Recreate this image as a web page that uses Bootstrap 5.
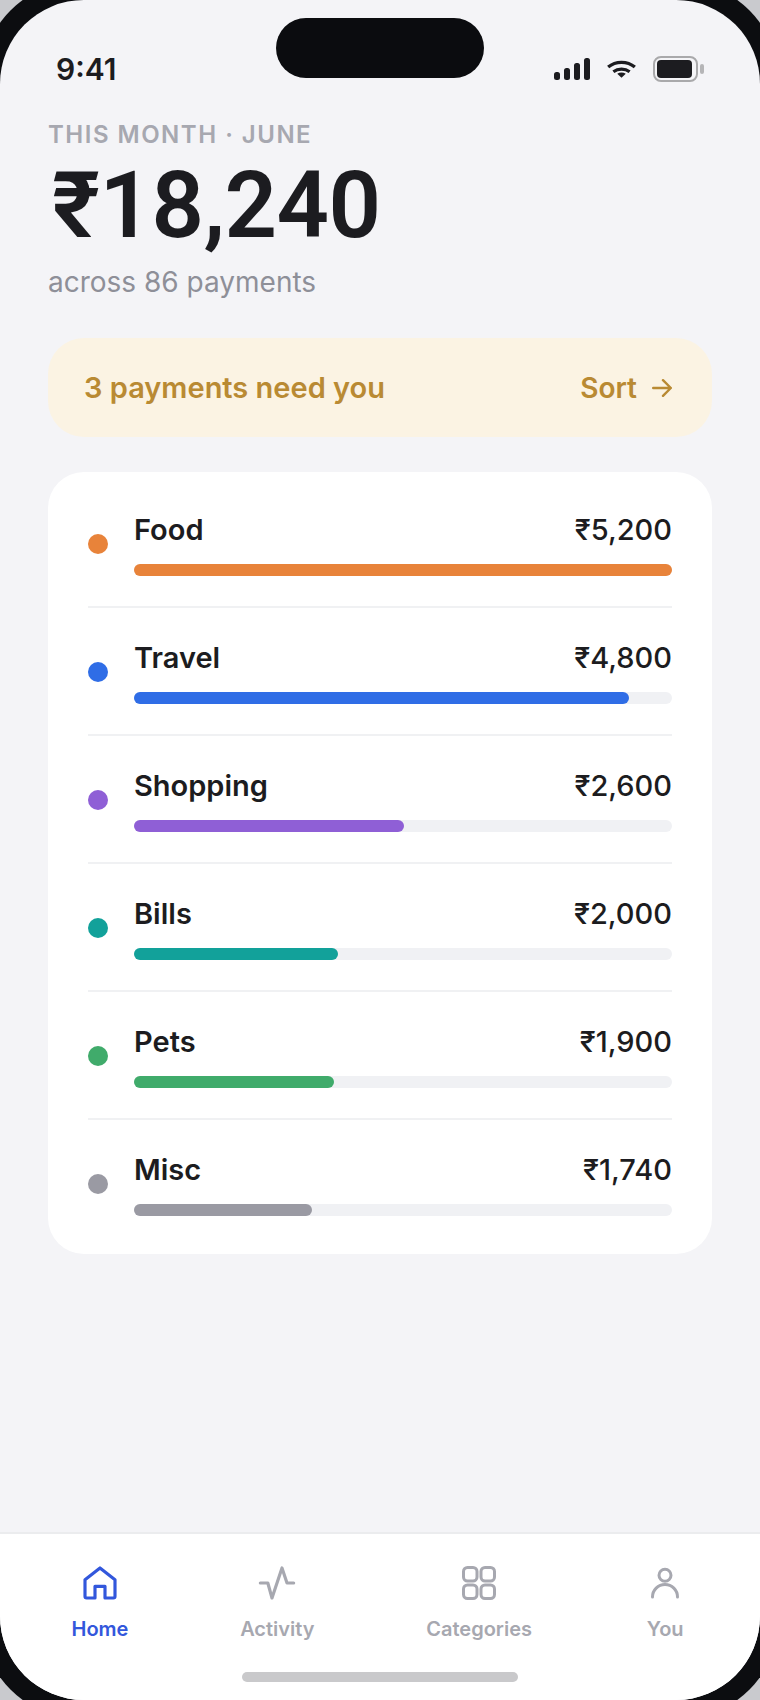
<!DOCTYPE html>
<html lang="en">
<head>
    <meta charset="UTF-8">
    <title>Spending</title>
    <link href="https://cdn.jsdelivr.net/npm/bootstrap@5.3.3/dist/css/bootstrap.min.css" rel="stylesheet">
    <style>
        html, body { margin: 0; height: 1700px; overflow: hidden; }
        body { background: #c9cace; font-family: Inter, "Liberation Sans", sans-serif; color: #1c1c20; }
        .phone-frame { width: 800px; height: 1740px; margin: -20px; padding: 20px; background: #0c0d10; border-radius: 104px; }
        .phone-screen { height: 1700px; background: #f4f4f7; border-radius: 84px; overflow: hidden; position: relative; }
        .island { position: absolute; left: 276px; top: 18px; width: 208px; height: 60px; background: #0b0c0f; border-radius: 30px; }
        .status-row { height: 120px; padding: 50px 56px 0 56px; }
        .status-icons { gap: 17px; margin-top: 6px; }
        .clock { font-size: 30px; font-weight: 600; line-height: 38px; color: #1c1c20; }
        .page-body { padding: 0 48px; }
        .eyebrow { font-size: 24px; line-height: 28px; font-weight: 600; letter-spacing: 1.5px; color: #a7a8b0; margin-top: 1px; }
        .big-total { font-family: Roboto, sans-serif; font-size: 92px; line-height: 104px; font-weight: 600; letter-spacing: -.6px; color: #1c1c20; margin: 5px 0 0 4px; }
        .sub-line { font-size: 28px; line-height: 36px; color: #8e8f98; margin-top: 6px; }
        .need-banner { height: 99px; margin-top: 38px; padding: 0 40px 0 36px; background: #fbf3e3; border-radius: 36px; color: #b98a33; font-size: 29px; font-weight: 600; }
        .sort-link { font-size: 28px; gap: 15px; }
        .cat-card { margin-top: 35px; padding: 8px 40px 8px 40px; background: #fff; border-radius: 36px; }
        .cat-row { padding: 32px 0 30px; border-bottom: 2px solid #f0f1f3; gap: 26px; }
        .cat-row:last-child { border-bottom: 0; }
        .cat-dot { width: 20px; height: 20px; border-radius: 50%; flex: none; }
        .cat-name { font-size: 29px; line-height: 36px; font-weight: 600; color: #1c1c20; }
        .cat-amt { font-size: 29px; line-height: 36px; font-weight: 500; color: #1c1c20; }
        .bar-track { height: 12px; margin-top: 16px; background: #f0f1f4; border-radius: 6px; }
        .bar-fill { height: 12px; border-radius: 6px; }
        .tab-bar { position: absolute; left: 0; right: 0; bottom: 0; height: 168px; background: #fff; border-top: 2px solid #ebecee; padding: 29px 0 0 71.5px; gap: 111.7px; }
        .tab-item { font-size: 20px; line-height: 28px; font-weight: 600; color: #a7a8b0; gap: 12px; min-width: 40px; }
        .tab-item:nth-child(4) { margin-left: 1.5px; }
        .tab-item.active { color: #3257dc; }
        .home-pill { position: absolute; left: 242px; bottom: 18px; width: 276px; height: 10px; background: #c9c9cb; border-radius: 5px; }
    </style>
</head>
<body>
<div class="phone-frame">
<div class="phone-screen">
    <div class="island"></div>

    <div class="status-row d-flex justify-content-between align-items-start">
        <div class="clock">9:41</div>
        <div class="status-icons d-flex align-items-center">
            <svg width="36" height="22" viewBox="0 0 36 22" fill="#1c1c20"><rect x="0" y="14" width="6" height="8" rx="2.5"/><rect x="10" y="10" width="6" height="12" rx="2.5"/><rect x="20" y="5" width="6" height="17" rx="2.5"/><rect x="30" y="0" width="6" height="22" rx="2.5"/></svg>
            <svg width="29" height="18" viewBox="0 0 30 18" fill="none" stroke="#1c1c20" stroke-width="3.4"><path d="M1.2 7C9 .4 21 .4 28.8 7"/><path d="M6.6 11.800c4.800-3.600 12-3.600 16.800 0"/><path d="M15 18l-4.400-4.200c2.600-1.600 6.200-1.600 8.800 0z" fill="#1c1c20" stroke="none"/></svg>
            <svg width="51" height="26" viewBox="0 0 51 26"><rect x="1" y="1" width="43" height="24" rx="7" fill="none" stroke="#a9a9ab" stroke-width="2"/><rect x="4" y="4" width="35" height="18" rx="4" fill="#1c1c20"/><rect x="47" y="8" width="4" height="10" rx="2" fill="#b5b5b7"/></svg>
        </div>
    </div>

    <div class="page-body">
        <div class="eyebrow">THIS MONTH · JUNE</div>
        <div class="big-total">₹18,240</div>
        <div class="sub-line">across 86 payments</div>

        <div class="need-banner d-flex justify-content-between align-items-center">
            <span>3 payments need you</span>
            <span class="sort-link d-flex align-items-center">Sort
                <svg width="20" height="18" viewBox="0 0 20 18" fill="none" stroke="#b98a33" stroke-width="2.4" stroke-linecap="round" stroke-linejoin="round"><path d="M1.200 9h17.600M11 1.200 18.800 9 11 16.800"/></svg>
            </span>
        </div>

        <div class="cat-card" id="cat-list"></div>
    </div>

    <div class="tab-bar d-flex">
        <div class="tab-item active d-flex flex-column align-items-center">
            <svg width="40" height="40" viewBox="0 0 24 24" fill="none" stroke="currentColor" stroke-width="1.9" stroke-linejoin="round" stroke-linecap="round"><path d="M3 10l9-7 9 7v10a1 1 0 0 1-1 1h-5v-7H9v7H4a1 1 0 0 1-1-1z"/></svg>
            <span>Home</span>
        </div>
        <div class="tab-item d-flex flex-column align-items-center">
            <svg width="40" height="40" viewBox="0 0 24 24" fill="none" stroke="currentColor" stroke-width="1.9" stroke-linejoin="round" stroke-linecap="round"><path d="M2 12h4.500L9 21l6-18 3 9h4"/></svg>
            <span>Activity</span>
        </div>
        <div class="tab-item d-flex flex-column align-items-center">
            <svg width="40" height="40" viewBox="0 0 40 40" fill="none" stroke="currentColor" stroke-width="3"><rect x="4.500" y="4.500" width="13.500" height="13.500" rx="4"/><rect x="22" y="4.500" width="13.500" height="13.500" rx="4"/><rect x="4.500" y="22" width="13.500" height="13.500" rx="4"/><rect x="22" y="22" width="13.500" height="13.500" rx="4"/></svg>
            <span>Categories</span>
        </div>
        <div class="tab-item d-flex flex-column align-items-center">
            <svg width="40" height="40" viewBox="0 0 40 40" fill="none" stroke="currentColor" stroke-width="3" stroke-linecap="round"><circle cx="20" cy="12.300" r="6"/><path d="M7.500 34a12.500 12.500 0 0 1 25 0"/></svg>
            <span>You</span>
        </div>
        <div class="home-pill"></div>
    </div>
</div>
</div>

<script src="https://cdn.jsdelivr.net/npm/bootstrap@5.3.3/dist/js/bootstrap.bundle.min.js"></script>
<script>
    const cats = [
        { name: 'Food', amt: '₹5,200', pct: 100, color: '#e8833a' },
        { name: 'Travel', amt: '₹4,800', pct: 92, color: '#2f6de6' },
        { name: 'Shopping', amt: '₹2,600', pct: 50.2, color: '#8f5fd6' },
        { name: 'Bills', amt: '₹2,000', pct: 38, color: '#12a19a' },
        { name: 'Pets', amt: '₹1,900', pct: 37.2, color: '#40ab6b' },
        { name: 'Misc', amt: '₹1,740', pct: 33, color: '#9a9aa3' }
    ];
    const list = document.getElementById('cat-list');
    cats.forEach((c) => {
        const row = document.createElement('div');
        row.className = 'cat-row d-flex align-items-center';
        row.innerHTML = `
            <span class="cat-dot" style="background:${c.color}"></span>
            <div class="flex-grow-1">
                <div class="d-flex justify-content-between">
                    <span class="cat-name">${c.name}</span>
                    <span class="cat-amt">${c.amt}</span>
                </div>
                <div class="bar-track"><div class="bar-fill" style="width:${c.pct}%;background:${c.color}"></div></div>
            </div>`;
        list.appendChild(row);
    });
</script>
</body>
</html>
